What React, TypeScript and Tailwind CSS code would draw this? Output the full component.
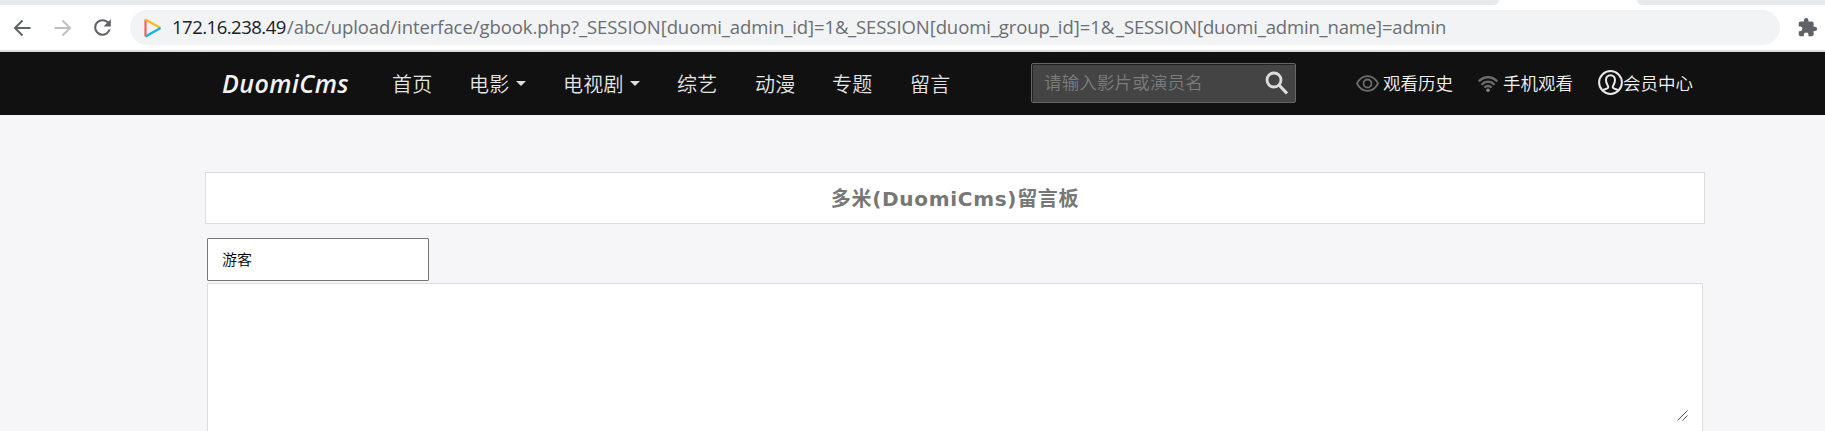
import React from "react";

const nav = [
  { label: "首页", menu: false, w: "w-[77px]" },
  { label: "电影", menu: true, w: "w-[94px]" },
  { label: "电视剧", menu: true, w: "w-[114px]" },
  { label: "综艺", menu: false, w: "w-[78px]" },
  { label: "动漫", menu: false, w: "w-[77px]" },
  { label: "专题", menu: false, w: "w-[78px]" },
  { label: "留言", menu: false, w: "w-[78px]" },
];

function BrowserBar() {
  return (
    <div className="h-[52px] shrink-0 border-b-2 border-[#dadce0] bg-white">
      <div className="flex h-[5px] justify-between">
        <div className="w-[1499px] rounded-br-[5px] bg-[#e7eaed]" />
        <div className="w-[188px] rounded-bl-[5px] bg-[#e7eaed]" />
      </div>
      <div className="flex h-[45px] items-center">
        <svg className="ml-[10px] size-6" viewBox="0 0 24 24" fill="none" stroke="#5f6368" strokeWidth="2">
          <path d="M20.500 12H5.500M12.500 4.500L5 12l7.500 7.500" />
        </svg>
        <svg className="ml-4 size-6" viewBox="0 0 24 24" fill="none" stroke="#bdc1c6" strokeWidth="2">
          <path d="M4.500 12H19.500M12.500 4.500L20 12l-7.500 7.500" />
        </svg>
        <svg className="ml-4 size-[25px]" viewBox="0 0 24 24" fill="#5f6368">
          <path d="M17.650 6.350A7.950 7.950 0 0 0 12 4a8 8 0 1 0 7.730 10h-2.080A6 6 0 1 1 12 6c1.660 0 3.140.69 4.220 1.780L13 11h7V4z" />
        </svg>
        <div className="ml-[15px] flex h-[35px] w-[1650px] items-center rounded-full bg-[#f1f3f4]">
          <svg className="ml-[14px] h-5 w-[18px]" viewBox="0 0 18 20" fill="none" strokeWidth="2.200">
            <path d="M1.500 18.500V1.500" stroke="#ff5f57" />
            <path d="M1.500 1.500L16.500 10" stroke="#fdbc18" />
            <path d="M16.500 10L1.500 18.500" stroke="#16b1e8" />
          </svg>
          <div className="ml-[10px] flex whitespace-nowrap font-['Open_Sans',sans-serif] text-[18.500px] leading-none text-[#6b6e72]">
            <span className="w-[115px] tracking-[-0.500px] text-[#202124]">172.16.238.49</span>
            <span className="w-[292px] tracking-[-0.070px]">/abc/upload/interface/gbook.php?</span>
            <span className="w-[269px] tracking-[-0.080px]">_SESSION[duomi_admin_id]=1&amp;</span>
            <span className="w-[268px] tracking-[-0.080px]">_SESSION[duomi_group_id]=1&amp;</span>
            <span className="tracking-[-0.160px]">_SESSION[duomi_admin_name]=admin</span>
          </div>
        </div>
        <svg className="ml-[17px] size-[21px]" viewBox="0 0 24 24" fill="#5f6368">
          <path d="M20.500 11H19V7a2 2 0 0 0-2-2h-4V3.500a2.500 2.500 0 0 0-5 0V5H4a2 2 0 0 0-1.990 2v3.800H3.500a2.700 2.700 0 0 1 0 5.400H2V20a2 2 0 0 0 2 2h3.800v-1.500a2.700 2.700 0 0 1 5.400 0V22H17a2 2 0 0 0 2-2v-4h1.500a2.500 2.500 0 0 0 0-5z" />
        </svg>
      </div>
    </div>
  );
}

function SiteHeader() {
  return (
    <header className="flex h-[63px] shrink-0 items-center bg-[#111] font-[350] text-[#e4e4e4]">
      <div className="ml-[222px] w-[170px] whitespace-nowrap pb-px font-['Open_Sans',sans-serif] text-[25px] font-semibold italic leading-8 tracking-[0.450px] text-[#f2f2f2]">
        DuomiCms
      </div>
      <nav className="flex text-[20px] leading-7 tracking-[0.300px]">
        {nav.map((item) => (
          <a key={item.label} className={`flex items-center whitespace-nowrap ${item.w}`}>
            {item.label}
            {item.menu && (
              <svg className="ml-[6px] h-[5px] w-[10px]" viewBox="0 0 10 5" fill="#ddd">
                <path d="M0 0h10L5 5z" />
              </svg>
            )}
          </a>
        ))}
      </nav>
      <div className="mb-px ml-[43px] flex h-10 w-[265px] items-center justify-between rounded-[2px] border border-[#666] bg-[#444] pl-[12px] pr-[6px] text-[17.500px] tracking-[0.150px] text-[#7c7c7c] shadow-[inset_1px_1px_0_#222]">
        <span className="pb-px">请输入影片或演员名</span>
        <svg className="size-6" viewBox="0 0 24 24" fill="none" stroke="#ddd">
          <circle cx="9" cy="9" r="7" strokeWidth="2.800" />
          <path d="M14 14l8 8.500" strokeWidth="3.200" />
        </svg>
      </div>
      <div className="flex items-center whitespace-nowrap text-[17.500px] text-[#f4f4f4]">
        <svg className="ml-[60px] h-[17px] w-[23px]" viewBox="0 0 23 17" fill="none" stroke="#6c6c6c" strokeWidth="1.800">
          <path d="M1 8.500C6-1.300 17-1.300 22 8.500C17 18.300 6 18.300 1 8.500z" />
          <circle cx="11.500" cy="8.500" r="4" />
        </svg>
        <span className="ml-1 w-[70px]">观看历史</span>
        <svg className="ml-[25px] h-4 w-5" viewBox="0 0 20 16" fill="none" stroke="#6c6c6c" strokeWidth="2.300">
          <path d="M.7 5.500C6-.2 14-.2 19.300 5.500M3.500 8.700c4-4 9-4 13 0M6.300 11.600c2.500-2.200 4.900-2.200 7.400 0" />
          <circle cx="10" cy="14.200" r="1.800" fill="#888" stroke="none" />
        </svg>
        <span className="ml-[5px] w-[70px]">手机观看</span>
        <svg className="mb-[3px] ml-[25px] size-[25px]" viewBox="0 0 25 25" fill="none" stroke="#e8e8e8" strokeWidth="2">
          <circle cx="12.500" cy="12.500" r="11.400" />
          <path d="M5 20.500c1-1.800 5.300-1.200 5.300-3.200 0-1.800-2.300-3.300-2.300-7.300 0-3 2-4.800 4.500-4.800s4.500 1.800 4.500 4.800c0 4-2.300 5.500-2.300 7.300 0 2 4.300 1.400 5.300 3.200" />
        </svg>
        <span>会员中心</span>
      </div>
    </header>
  );
}

export default function App() {
  return (
    <div className="flex h-[431px] w-[1825px] flex-col overflow-hidden bg-[#f6f6f8] font-['Noto_Sans_CJK_SC',sans-serif]">
      <BrowserBar />
      <SiteHeader />
      <main className="ml-[205px] mt-[57px] w-[1500px]">
        <h1 className="flex h-[52px] items-center justify-center border border-[#ddd] bg-white pt-[2px] font-['DejaVu_Sans','Noto_Sans_CJK_SC',sans-serif] text-[20px] font-bold tracking-[0.700px] text-[#777]">
          多米(DuomiCms)留言板
        </h1>
        <div className="mx-[2px] mt-[14px]">
          <input
            className="block h-[43px] w-[222px] rounded-[1px] border border-[#767676] bg-white px-[14px] pb-[2px] text-[15px] font-[350] text-black outline-none"
            defaultValue="游客"
          />
          <div className="mt-[2px] flex h-[200px] justify-end border border-[#ddd] bg-white pr-[14px] pt-[126px]">
            <svg className="size-[11px]" viewBox="0 0 11 11" fill="none" stroke="#555">
              <path d="M.5 10.500l10-10M5.500 10.500l5-5" />
            </svg>
          </div>
        </div>
      </main>
    </div>
  );
}
